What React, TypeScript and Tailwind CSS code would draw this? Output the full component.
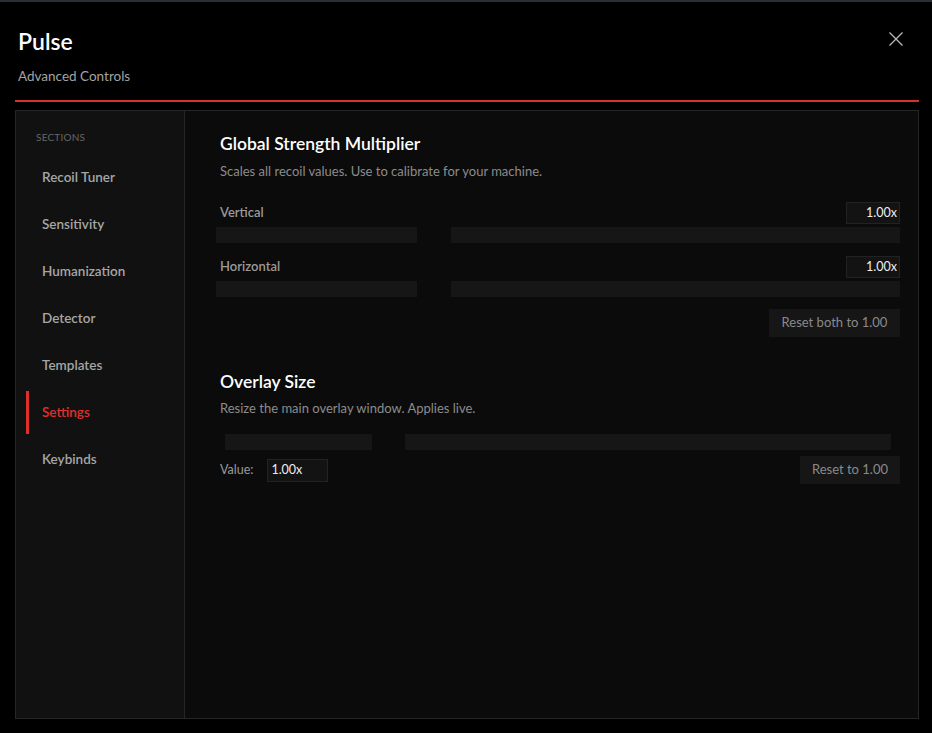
import React from "react";

const sections = [
  "Recoil Tuner",
  "Sensitivity",
  "Humanization",
  "Detector",
  "Templates",
  "Settings",
  "Keybinds",
];

function Track({ left, gap, className = "" }: { left: number; gap: number; className?: string }) {
  return (
    <div className={`flex h-[16px] ${className}`}>
      <div className="h-full bg-[#161616]" style={{ width: left }} />
      <div style={{ width: gap }} />
      <div className="h-full flex-1 bg-[#161616]" />
    </div>
  );
}

function MultiplierRow({ label }: { label: string }) {
  return (
    <div>
      <div className="flex h-[22px] items-center justify-between">
        <span className="pl-[4px] text-[13px] font-semibold text-[#9a9a9a]">{label}</span>
        <div className="flex h-[22px] w-[54px] items-center justify-end border border-[#222] bg-[#131313] pr-[2px] text-[12.5px] text-[#eee]">
          1.00x
        </div>
      </div>
      <Track left={201} gap={34} className="mt-[3px]" />
    </div>
  );
}

export default function App() {
  return (
    <div
      className="flex h-[733px] w-[932px] flex-col border-t-2 border-[#2b2f36] bg-black pl-[15px] pr-[13px] pb-[14px]"
      style={{ fontFamily: "Lato, 'Noto Sans', sans-serif" }}
    >
      {/* header */}
      <div className="flex items-start justify-between pt-[25px]">
        <div className="pl-[3px]">
          <div className="text-[23px] font-semibold leading-[28px] text-white">Pulse</div>
          <div className="mt-[12px] text-[13.5px] leading-[18px] text-[#a3a3a3]">Advanced Controls</div>
        </div>
        <button className="mr-[16px] mt-[5px] text-[#b5b5b5]">
          <svg width="14" height="14" viewBox="0 0 14 14" fill="none" stroke="currentColor" strokeWidth="1.4">
            <path d="M0.5 0.5 L13.5 13.5 M13.5 0.5 L0.5 13.5" />
          </svg>
        </button>
      </div>
      <div className="mt-[15px] h-[2px] bg-[#d8302c]" />

      {/* body */}
      <div className="mt-[8px] flex flex-1 border border-[#262626]">
        <aside className="w-[169px] border-r border-[#262626] bg-[#111111] pt-[19px]">
          <div className="pl-[20px] text-[10px] leading-[14px] tracking-[0.02em] text-[#666]">SECTIONS</div>
          <div className="mt-[10px]">
            {sections.map((s) => {
              const active = s === "Settings";
              return (
                <div key={s} className="relative ml-[10px] flex h-[47px] items-center pl-[16px]">
                  {active && <div className="absolute left-0 top-[2px] h-[43px] w-[3px] bg-[#e0302c]" />}
                  <span
                    className={`text-[13.5px] font-semibold ${active ? "text-[#e0302c]" : "text-[#a6a6a6]"}`}
                  >
                    {s}
                  </span>
                </div>
              );
            })}
          </div>
        </aside>

        <main className="flex-1 bg-[#0b0b0b] pl-[31px] pr-[18px] pt-[22px]">
          <h2 className="pl-[4px] text-[17.5px] font-semibold leading-[22px] text-white">
            Global Strength Multiplier
          </h2>
          <p className="mt-[8px] pl-[4px] text-[13px] leading-[16px] text-[#8c8c8c]">
            Scales all recoil values. Use to calibrate for your machine.
          </p>

          <div className="mt-[23px]">
            <MultiplierRow label="Vertical" />
          </div>
          <div className="mt-[13px]">
            <MultiplierRow label="Horizontal" />
          </div>
          <div className="mt-[12px] flex justify-end">
            <button className="h-[28px] w-[131px] bg-[#161616] text-[13px] text-[#8a8a8a]">
              Reset both to 1.00
            </button>
          </div>

          <h2 className="mt-[34px] pl-[4px] text-[17.5px] font-semibold leading-[22px] text-white">
            Overlay Size
          </h2>
          <p className="mt-[7px] pl-[4px] text-[13px] leading-[16px] text-[#8c8c8c]">
            Resize the main overlay window. Applies live.
          </p>
          <Track left={147} gap={33} className="mx-[9px] mt-[18px]" />
          <div className="mt-[6px] flex h-[28px] items-center justify-between">
            <div className="flex items-center pl-[4px]">
              <span className="text-[12.5px] text-[#9a9a9a]">Value:</span>
              <div className="ml-[14px] flex h-[23px] w-[61px] items-center border border-[#232323] bg-[#131313] pl-[3px] text-[12.5px] text-[#eee]">
                1.00x
              </div>
            </div>
            <button className="h-[28px] w-[100px] bg-[#161616] text-[13px] text-[#8a8a8a]">Reset to 1.00</button>
          </div>
        </main>
      </div>
    </div>
  );
}
